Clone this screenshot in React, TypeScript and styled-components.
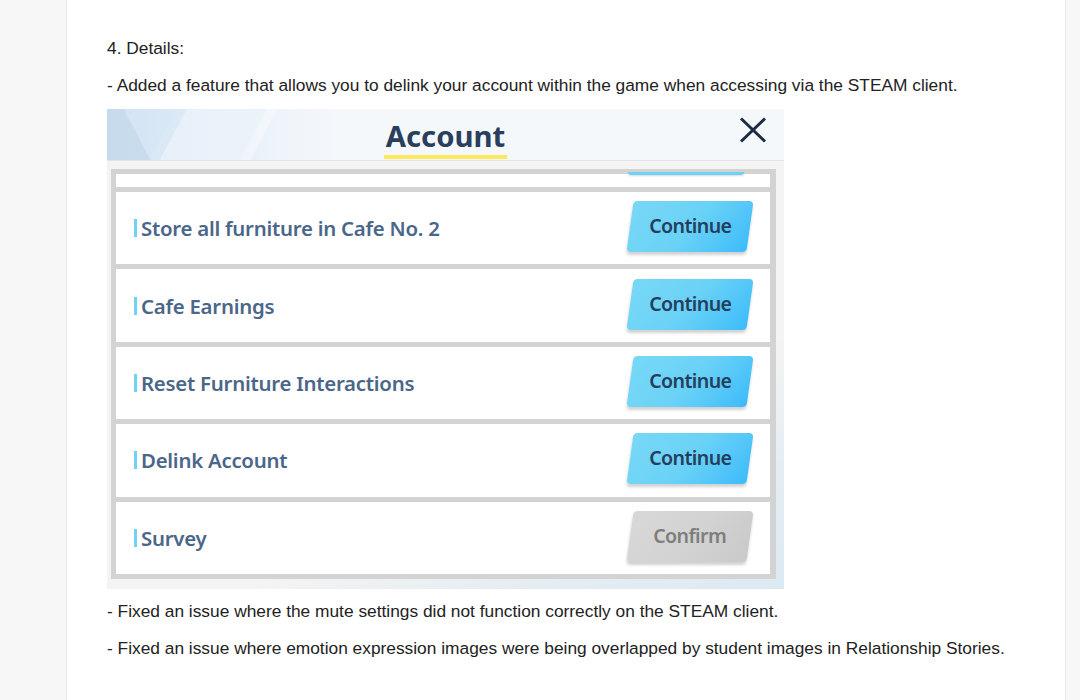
import React from 'react'
import styled, { createGlobalStyle } from 'styled-components'

type Entry = {
  label: string;
  action: string;
  disabled?: boolean;
};

const entries: Entry[] = [
  { label: 'Store all furniture in Cafe No. 2', action: 'Continue' },
  { label: 'Cafe Earnings', action: 'Continue' },
  { label: 'Reset Furniture Interactions', action: 'Continue' },
  { label: 'Delink Account', action: 'Continue' },
  { label: 'Survey', action: 'Confirm', disabled: true },
]

const GlobalStyle = createGlobalStyle`
  html, body {
    margin: 0;
    padding: 0;
    background: #f7f7f7;
  }
`

const App = () => {
  return (
    <Page>
      <GlobalStyle />
      <Column>
        <Para>4. Details:</Para>
        <Para>- Added a feature that allows you to delink your account within the game when accessing via the STEAM client.</Para>
        <Shot>
          <Header>
            <span />
            <Title>Account</Title>
            <CloseButton>
              <svg width="28" height="26" viewBox="0 0 28 26">
                <path d="M2 1.5 L26 24.5 M26 1.5 L2 24.5" stroke="#1d2c42" strokeWidth="3" fill="none" />
              </svg>
            </CloseButton>
          </Header>
          <Body>
            <Panel>
              <PeekRow>
                <PeekButton />
              </PeekRow>
              {entries.map((entry) => (
                <Row key={entry.label}>
                  <Label>{entry.label}</Label>
                  <ActionButton $disabled={entry.disabled}>
                    <span>{entry.action}</span>
                  </ActionButton>
                </Row>
              ))}
            </Panel>
          </Body>
        </Shot>
        <Para>- Fixed an issue where the mute settings did not function correctly on the STEAM client.</Para>
        <Para>- Fixed an issue where emotion expression images were being overlapped by student images in Relationship Stories.</Para>
      </Column>
    </Page>
  )
}

export default App


const Page = styled.div`
  min-height: 700px;
  background: #f7f7f7;
  overflow: hidden;
`

const Column = styled.div`
  box-sizing: border-box;
  margin-left: 66px;
  width: 1000px;
  min-height: 700px;
  background: #fff;
  border-left: 1px solid #e9e9e9;
  border-right: 1px solid #e9e9e9;
  padding: 37px 40px 0 40px;
  display: flex;
  flex-direction: column;
  align-items: flex-start;
`

const Para = styled.p`
  margin: 0 0 15px;
  font-family: "Liberation Sans", Arial, sans-serif;
  font-size: 13pt;
  line-height: 22px;
  color: #222;
`

const Shot = styled.div`
  width: 677px;
  height: 480px;
  margin: -2px 0 11px;
  display: flex;
  flex-direction: column;
  font-family: "Noto Sans", "Open Sans", sans-serif;
`

const Header = styled.div`
  flex: 0 0 51px;
  display: grid;
  grid-template-columns: 1fr auto 1fr;
  align-items: end;
  border-bottom: 1px solid #e2e4e6;
  background:
    linear-gradient(62deg, rgba(186, 208, 228, 0.45) 0 38px, transparent 39px),
    linear-gradient(118deg, transparent 0 70px, rgba(255, 255, 255, 0.35) 71px 150px, transparent 151px),
    linear-gradient(-62deg, transparent 0 480px, rgba(220, 234, 246, 0.6) 481px 560px, transparent 561px),
    linear-gradient(90deg, #d1e3f4 0, #d8e7f5 60px, #e4eef8 120px, #eff4fa 175px, #f5f8fb 240px);
`

const Title = styled.h1`
  margin: 0 0 1px;
  padding: 0 2px;
  font-size: 29.3px;
  line-height: 38px;
  font-weight: 700;
  color: #2a3f5d;
  border-bottom: 4px solid #fbe85e;
`

const CloseButton = styled.div`
  justify-self: end;
  align-self: center;
  margin-right: 17px;
  margin-top: -9px;
  display: flex;
`

const Body = styled.div`
  flex: 1;
  box-sizing: border-box;
  padding: 8px 8px 10px 4px;
  background:
    linear-gradient(155deg, transparent 66%, rgba(220, 233, 244, 0.6) 82%, rgba(214, 230, 243, 0.8) 100%),
    #f4f4f2;
`

const Panel = styled.div`
  box-sizing: border-box;
  height: 410px;
  padding: 5px 6px 5px 5px;
  background: #d3d3d3;
  display: flex;
  flex-direction: column;
  gap: 5px;
  overflow: hidden;
`

const PeekRow = styled.div`
  flex: 0 0 13px;
  background: #fff;
  position: relative;
`

const PeekButton = styled.div`
  position: absolute;
  right: 26px;
  top: -2px;
  width: 116px;
  height: 3px;
  border-radius: 0 0 4px 4px;
  background: #6dd3f6;
  box-shadow: 0 1px 2px rgba(0, 0, 0, 0.15);
`

const Row = styled.div`
  flex: 0 0 72.4px;
  background: #fff;
  display: flex;
  align-items: center;
  justify-content: space-between;
  padding: 0 20px 0 18px;
`

const Label = styled.div`
  display: flex;
  align-items: center;
  font-size: 20.4px;
  font-weight: 600;
  color: #4a6689;
  letter-spacing: -0.25px;
  &::before {
    content: '';
    width: 3px;
    height: 18px;
    margin-right: 4px;
    background: #6fd2f7;
  }
`

const ActionButton = styled.div<{ $disabled?: boolean }>`
  width: 120px;
  height: 51px;
  margin-bottom: 3px;
  transform: skewX(-8deg);
  border-radius: 4px;
  display: flex;
  align-items: center;
  justify-content: center;
  background: ${({ $disabled }) =>
    $disabled
      ? 'linear-gradient(125deg, #d8d8d8 0%, #d2d2d2 55%, #c9c9c9 100%)'
      : 'linear-gradient(125deg, #78d8f6 0%, #6ad2f6 50%, #55c7f8 75%, #3cbbfa 100%)'};
  box-shadow: 0 3px 3px rgba(0, 0, 0, 0.18);
  > span {
    transform: skewX(8deg);
    font-size: 19.6px;
    font-weight: 600;
    letter-spacing: -0.6px;
    color: ${({ $disabled }) => ($disabled ? '#7e7e7e' : '#243e5e')};
    margin-top: -3px;
  }
`
